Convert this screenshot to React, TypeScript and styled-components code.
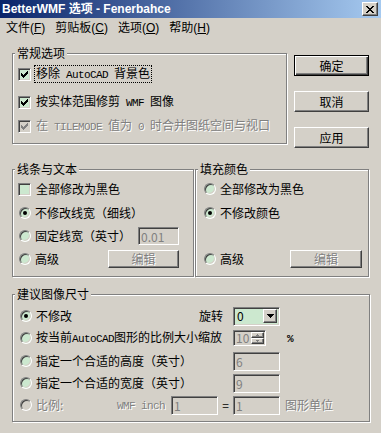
import React from 'react'
import styled, { createGlobalStyle, css } from 'styled-components'

const face = '#D4D0C8'
const shadow = '#808080'
const dark = '#404040'
const hilite = '#FFFFFF'
const green = '#CCE8CF'

const GlobalStyle = createGlobalStyle`
  html, body {
    margin: 0;
    padding: 0;
    background: ${face};
  }
  body {
    font-family: "Noto Sans CJK SC", "DejaVu Sans", sans-serif;
    font-size: 12px;
    line-height: 14px;
    color: #000;
  }
`

const raised = css`
  border: 1px solid;
  border-color: ${hilite} ${dark} ${dark} ${hilite};
  box-shadow: inset -1px -1px 0 ${shadow};
`

const sunken = css`
  border: 1px solid;
  border-color: ${shadow} ${hilite} ${hilite} ${shadow};
  box-shadow: inset 1px 1px 0 ${dark}, inset -1px -1px 0 ${face};
`

const disabledText = css`
  color: ${shadow};
  text-shadow: 1px 1px 0 ${hilite};
`

const Window = styled.div`
  width: 381px;
  height: 433px;
  background: ${face};
  display: flex;
  flex-direction: column;
  overflow: hidden;
`

const TitleBar = styled.div`
  height: 18px;
  flex: none;
  display: flex;
  align-items: center;
  justify-content: space-between;
  padding: 0 3px 0 2px;
  background: linear-gradient(to right, #0a246a, #a6caf0);
`

const TitleText = styled.span`
  font-family: "Liberation Sans", "Noto Sans CJK SC", sans-serif;
  font-weight: bold;
  font-size: 12px;
  color: #fff;
  white-space: nowrap;
`

const CloseButton = styled.span`
  ${raised};
  box-sizing: border-box;
  width: 16px;
  height: 14px;
  background: ${face};
  display: flex;
  align-items: center;
  justify-content: center;
`

const MenuBar = styled.div`
  height: 19px;
  flex: none;
  display: flex;
  align-items: center;
  padding-left: 1px;
  font-family: "Liberation Sans", "Noto Sans CJK SC", sans-serif;
`

const MenuItem = styled.span`
  padding: 0 5px;
  white-space: nowrap;
`

const Body = styled.div`
  display: flex;
  flex-direction: column;
  padding-left: 12px;
`

const TopRow = styled.div`
  display: flex;
  align-items: flex-start;
  gap: 7px;
  margin-top: 16px;
`

const MidRow = styled.div`
  display: flex;
  gap: 1px;
  margin-top: 21px;
`

const Group = styled.div<{ $w: number; $h: number; $pl?: number; $pr?: number; $mt?: number }>`
  position: relative;
  box-sizing: border-box;
  flex: none;
  width: ${(p) => p.$w}px;
  height: ${(p) => p.$h}px;
  margin-top: ${(p) => p.$mt ?? 0}px;
  padding: 0 ${(p) => p.$pr ?? 0}px 0 ${(p) => p.$pl ?? 0}px;
  border: 1px solid ${shadow};
  box-shadow: inset 1px 1px 0 ${hilite}, 1px 1px 0 ${hilite};
  display: flex;
  flex-direction: column;
`

const Legend = styled.span`
  position: absolute;
  top: -8px;
  left: 2px;
  padding: 0 2px;
  background: ${face};
  line-height: 14px;
  white-space: nowrap;
`

const Row = styled.div<{ $mt: number; $indent?: number }>`
  display: flex;
  align-items: center;
  height: 16px;
  margin-top: ${(p) => p.$mt}px;
  padding-left: ${(p) => p.$indent ?? 0}px;
  white-space: nowrap;
`

const SizeRow = styled.div<{ $mt: number }>`
  display: grid;
  grid-template-columns: 213px 47px auto;
  align-items: center;
  height: 20px;
  margin-top: ${(p) => p.$mt}px;
  white-space: nowrap;
`

const Cell = styled.div`
  display: flex;
  align-items: center;
  min-width: 0;
`

const Label = styled.span<{ $disabled?: boolean; $focus?: boolean; $gap?: number }>`
  margin-left: ${(p) => (p.$focus ? 3 : p.$gap ?? 5)}px;
  ${(p) => p.$disabled && disabledText};
  ${(p) =>
    p.$focus &&
    css`
      border: 1px dotted #000;
      padding: 0 1px;
    `};
`

const Lat = styled.span`
  font-family: "Liberation Mono", monospace;
  font-size: 11px;
  letter-spacing: -0.6px;
`

const Box = styled.span<{ $disabled?: boolean }>`
  ${sunken};
  box-sizing: border-box;
  flex: none;
  width: 13px;
  height: 13px;
  background: ${(p) => (p.$disabled ? face : green)};
  display: flex;
  align-items: center;
  justify-content: center;
`

const RadioDot = styled.span<{ $disabled?: boolean; $on?: boolean }>`
  ${sunken};
  box-sizing: border-box;
  flex: none;
  width: 12px;
  height: 12px;
  border-radius: 50%;
  background: ${(p) => (p.$disabled ? face : green)};
  display: flex;
  align-items: center;
  justify-content: center;
  &::after {
    content: '';
    display: ${(p) => (p.$on ? 'block' : 'none')};
    width: 4px;
    height: 4px;
    border-radius: 50%;
    background: #000;
  }
`

const Button = styled.button<{ $w: number; $h: number; $default?: boolean }>`
  box-sizing: border-box;
  width: ${(p) => p.$w}px;
  height: ${(p) => p.$h}px;
  padding: 0;
  font: inherit;
  color: #000;
  background: ${face};
  ${(p) =>
    p.$default
      ? css`
          border: 1px solid #000;
          box-shadow: inset 1px 1px 0 ${hilite}, inset -1px -1px 0 ${dark}, inset -2px -2px 0 ${shadow};
        `
      : raised};
  &:disabled {
    ${disabledText};
  }
`

const ButtonColumn = styled.div`
  display: flex;
  flex-direction: column;
  gap: 15px;
  margin-top: 2px;
`

const Field = styled.input<{ $w: number; $h?: number }>`
  ${sunken};
  box-sizing: border-box;
  width: ${(p) => p.$w}px;
  height: ${(p) => p.$h ?? 19}px;
  padding: 0 0 0 2px;
  margin: 0;
  font: inherit;
  background: ${face};
  color: ${shadow};
  outline: none;
`

const Combo = styled.div`
  ${sunken};
  box-sizing: border-box;
  width: 47px;
  height: 19px;
  background: ${green};
  display: flex;
  align-items: center;
  justify-content: space-between;
  padding: 0 2px 0 3px;
`

const DropButton = styled.span`
  ${raised};
  box-sizing: border-box;
  width: 14px;
  height: 14px;
  background: ${face};
  display: flex;
  align-items: center;
  justify-content: center;
`

const Spin = styled.div`
  ${sunken};
  box-sizing: border-box;
  width: 33px;
  height: 16px;
  background: ${face};
  display: flex;
  align-items: center;
  justify-content: space-between;
  padding: 0 1px 0 2px;
  color: ${shadow};
`

const SpinButtons = styled.span`
  display: flex;
  flex-direction: column;
  width: 13px;
  height: 12px;
`

const SpinPart = styled.span`
  ${raised};
  box-sizing: border-box;
  flex: 1;
  display: flex;
  align-items: center;
  justify-content: center;
`

const Aside = styled.span<{ $ml: number; $disabled?: boolean }>`
  margin-left: ${(p) => p.$ml}px;
  ${(p) => p.$disabled && disabledText};
`

const Percent = styled.span`
  font-family: "Liberation Mono", monospace;
  font-weight: bold;
  font-size: 11px;
`

const RightTag = styled.span`
  margin-left: auto;
  margin-right: 10px;
`

const Equals = styled.span`
  width: 15px;
  text-align: center;
`

const Spacer = styled.span`
  margin-left: auto;
`

const Check = ({ color }: { color: string }) => (
  <svg width="7" height="7" viewBox="0 0 7 7" shapeRendering="crispEdges">
    {[2, 3, 4, 3, 2, 1, 0].map((y, x) => (
      <rect key={x} x={x} y={y} width="1" height="3" fill={color} />
    ))}
  </svg>
)

const CloseGlyph = () => (
  <svg width="8" height="7" viewBox="0 0 8 7" shapeRendering="crispEdges">
    {[
      [0, 0, 2], [6, 0, 2],
      [1, 1, 2], [5, 1, 2],
      [2, 2, 4],
      [3, 3, 2],
      [2, 4, 4],
      [1, 5, 2], [5, 5, 2],
      [0, 6, 2], [6, 6, 2],
    ].map(([x, y, w], i) => (
      <rect key={i} x={x} y={y} width={w} height="1" fill="#000" />
    ))}
  </svg>
)

const Arrow = ({ w, color, up }: { w: number; color: string; up?: boolean }) => (
  <svg width={w} height={(w + 1) / 2} viewBox={`0 0 ${w} ${(w + 1) / 2}`} shapeRendering="crispEdges">
    {Array.from({ length: (w + 1) / 2 }, (_, i) => (
      <rect
        key={i}
        x={i}
        y={up ? (w + 1) / 2 - 1 - i : i}
        width={w - 2 * i}
        height="1"
        fill={color}
      />
    ))}
  </svg>
)

const CheckItem = ({
  mt,
  disabled,
  focus,
  children,
  checked,
}: {
  mt: number
  disabled?: boolean
  focus?: boolean
  checked?: boolean
  children: React.ReactNode
}) => (
  <Row $mt={mt}>
    <Box $disabled={disabled}>{checked && <Check color={disabled ? shadow : '#000'} />}</Box>
    <Label $disabled={disabled} $focus={focus}>
      {children}
    </Label>
  </Row>
)

const Radio = ({ on, disabled, children }: { on?: boolean; disabled?: boolean; children: React.ReactNode }) => (
  <>
    <RadioDot $on={on} $disabled={disabled} />
    <Label $disabled={disabled} $gap={4}>
      {children}
    </Label>
  </>
)

export default function App() {
  return (
    <Window>
      <GlobalStyle />
      <TitleBar>
        <TitleText>BetterWMF 选项 - Fenerbahce</TitleText>
        <CloseButton>
          <CloseGlyph />
        </CloseButton>
      </TitleBar>
      <MenuBar>
        <MenuItem>文件(<u>F</u>)</MenuItem>
        <MenuItem>剪贴板(<u>C</u>)</MenuItem>
        <MenuItem>选项(<u>O</u>)</MenuItem>
        <MenuItem>帮助(<u>H</u>)</MenuItem>
      </MenuBar>
      <Body>
        <TopRow>
          <Group $w={275} $h={91} $pl={5}>
            <Legend>常规选项</Legend>
            <CheckItem mt={12} checked focus>
              移除<Lat> AutoCAD </Lat>背景色
            </CheckItem>
            <CheckItem mt={12} checked>
              按实体范围修剪<Lat> WMF </Lat>图像
            </CheckItem>
            <CheckItem mt={8} checked disabled>
              在<Lat> TILEMODE </Lat>值为<Lat> 0 </Lat>时合并图纸空间与视口
            </CheckItem>
          </Group>
          <ButtonColumn>
            <Button $w={75} $h={21} $default>
              确定
            </Button>
            <Button $w={75} $h={21}>
              取消
            </Button>
            <Button $w={75} $h={21}>
              应用
            </Button>
          </ButtonColumn>
        </TopRow>

        <MidRow>
          <Group $w={182} $h={108} $pl={5} $pr={14}>
            <Legend>线条与文本</Legend>
            <CheckItem mt={11}>全部修改为黑色</CheckItem>
            <Row $mt={8} $indent={1}>
              <Radio on>不修改线宽（细线）</Radio>
            </Row>
            <Row $mt={7} $indent={1}>
              <Radio>固定线宽（英寸）</Radio>
              <Spacer />
              <Field $w={41} $h={18} value="0.01" disabled readOnly />
            </Row>
            <Row $mt={7} $indent={1}>
              <Radio>高级</Radio>
              <Spacer />
              <Button $w={71} $h={18} disabled>
                编辑
              </Button>
            </Row>
          </Group>
          <Group $w={174} $h={108} $pl={8} $pr={6}>
            <Legend>填充颜色</Legend>
            <Row $mt={11}>
              <Radio>全部修改为黑色</Radio>
            </Row>
            <Row $mt={8}>
              <Radio on>不修改颜色</Radio>
            </Row>
            <Row $mt={30}>
              <Radio>高级</Radio>
              <Spacer />
              <Button $w={72} $h={18} disabled>
                编辑
              </Button>
            </Row>
          </Group>
        </MidRow>

        <Group $w={358} $h={128} $pl={7} $mt={17}>
          <Legend>建议图像尺寸</Legend>
          <SizeRow $mt={11}>
            <Cell>
              <Radio on>不修改</Radio>
              <RightTag>旋转</RightTag>
            </Cell>
            <Combo>
              <span>0</span>
              <DropButton>
                <Arrow w={7} color="#000" />
              </DropButton>
            </Combo>
          </SizeRow>
          <SizeRow $mt={2}>
            <Cell>
              <Radio>
                按当前<Lat>AutoCAD</Lat>图形的比例大小缩放
              </Radio>
            </Cell>
            <Spin>
              <span>10</span>
              <SpinButtons>
                <SpinPart>
                  <Arrow w={3} color={shadow} up />
                </SpinPart>
                <SpinPart>
                  <Arrow w={3} color={shadow} />
                </SpinPart>
              </SpinButtons>
            </Spin>
            <Aside $ml={7}>
              <Percent>%</Percent>
            </Aside>
          </SizeRow>
          <SizeRow $mt={3}>
            <Cell>
              <Radio>指定一个合适的高度（英寸）</Radio>
            </Cell>
            <Field $w={47} value="6" disabled readOnly />
          </SizeRow>
          <SizeRow $mt={2}>
            <Cell>
              <Radio>指定一个合适的宽度（英寸）</Radio>
            </Cell>
            <Field $w={47} value="9" disabled readOnly />
          </SizeRow>
          <SizeRow $mt={2}>
            <Cell>
              <Radio disabled>比例:</Radio>
              <Spacer />
              <Aside $ml={0} $disabled>
                <Lat>WMF inch</Lat>
              </Aside>
              <Aside $ml={6}>
                <Field $w={47} value="1" disabled readOnly />
              </Aside>
              <Equals>=</Equals>
            </Cell>
            <Field $w={47} value="1" disabled readOnly />
            <Aside $ml={5} $disabled>
              图形单位
            </Aside>
          </SizeRow>
        </Group>
      </Body>
    </Window>
  )
}
